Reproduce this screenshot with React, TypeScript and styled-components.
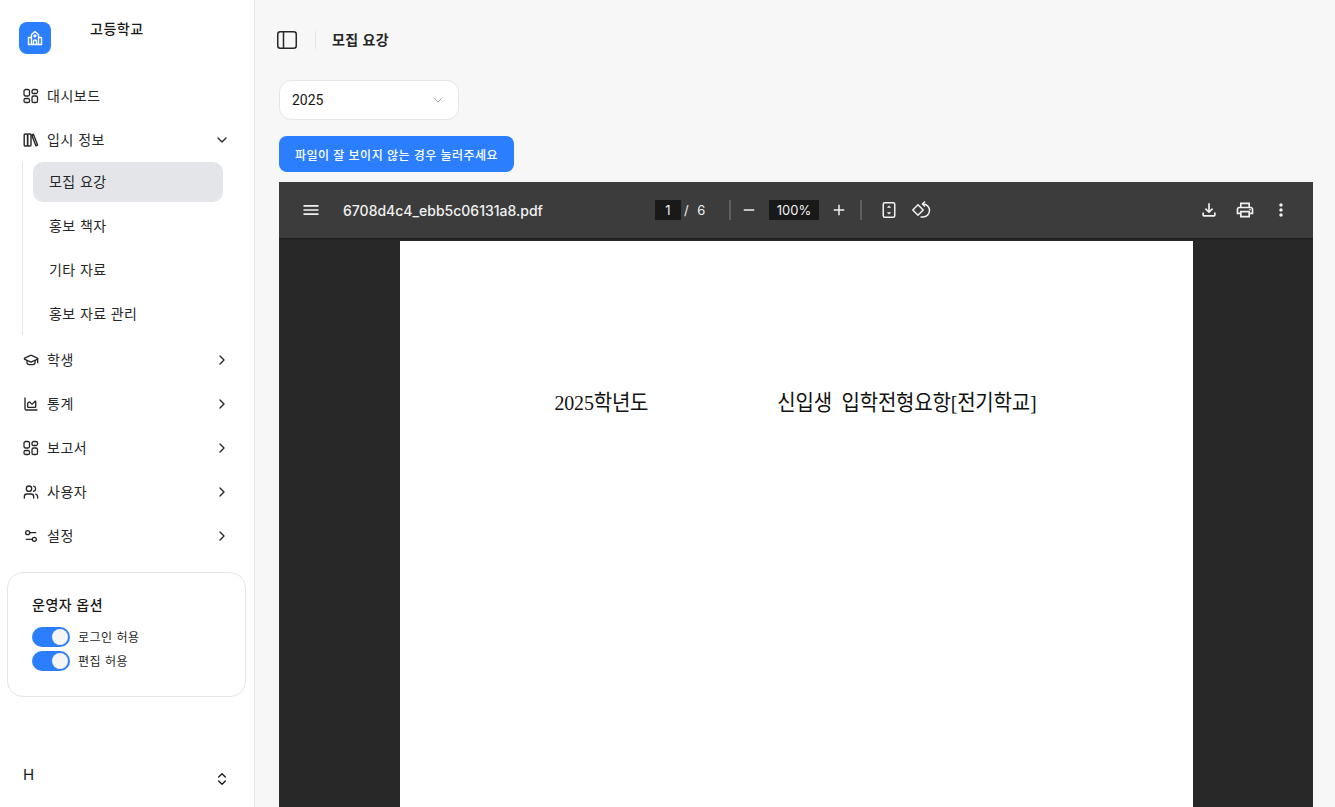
import styled, { createGlobalStyle } from 'styled-components';
import { ChartArea, ChevronDown, ChevronRight, ChevronsUpDown, GraduationCap, Settings2, Users } from 'lucide-react';
import { MdAdd, MdMenu, MdMoreVert, MdOutlineFileDownload, MdOutlinePrint, MdRemove } from 'react-icons/md';

const GlobalStyle = createGlobalStyle`
  * { box-sizing: border-box; }
  html, body { margin: 0; height: 100%; }
  body {
    font-family: Inter, "Noto Sans CJK KR", sans-serif;
    color: #171717;
    background: #f7f7f7;
    overflow: hidden;
  }
`;

const Page = styled.div`
  display: flex;
  height: 100vh;
  overflow: hidden;
`;

const Sidebar = styled.aside`
  width: 255px;
  flex: none;
  display: flex;
  flex-direction: column;
  background: #fff;
  border-right: 1px solid #e5e5e5;
`;

const Brand = styled.div`
  display: flex;
  padding: 22px 0 0 19px;
  height: 74px;
`;

const LogoBox = styled.div`
  width: 32px;
  height: 32px;
  border-radius: 8px;
  background: #2b7fff;
  color: #fff;
  display: flex;
  align-items: center;
  justify-content: center;
`;

const BrandName = styled.div`
  margin: -1px 0 0 39px;
  font-size: 14px;
  line-height: 16px;
  font-weight: 500;
  letter-spacing: 0.5px;
`;

const Nav = styled.nav`
  display: flex;
  flex-direction: column;
  padding: 0 24px 0 23px;
`;

const NavRow = styled.div`
  height: 44px;
  display: flex;
  align-items: center;
  gap: 8px;
  font-size: 14px;
  color: #262626;

  svg { flex: none; }
`;

const NavText = styled.span`
  flex: 1;
  margin-top: -2px;
  letter-spacing: 0.5px;
`;

const SubList = styled.div`
  display: flex;
  flex-direction: column;
  margin: 0 0 3px -1px;
  padding: 0 7px 0 10px;
  border-left: 1px solid #e5e5e5;
  gap: 4px;
  height: 173px;
`;

const SubItem = styled.div<{ $active?: boolean }>`
  height: 40px;
  flex: none;
  display: flex;
  align-items: center;
  padding: 0 0 2px 16px;
  border-radius: 10px;
  font-size: 14px;
  letter-spacing: 0.4px;
  color: #262626;
  background: ${(p) => (p.$active ? '#e4e5e9' : 'transparent')};
`;

const OptionCard = styled.section`
  margin: 14px 8px 0 7px;
  height: 125px;
  padding: 22px 24px;
  border: 1px solid #e5e5e5;
  border-radius: 16px;
  display: flex;
  flex-direction: column;
`;

const OptionTitle = styled.div`
  font-size: 14px;
  line-height: 20px;
  font-weight: 500;
  letter-spacing: 0.5px;
  margin-bottom: 12px;
`;

const OptionRow = styled.div`
  height: 25px;
  display: flex;
  align-items: flex-start;
  gap: 8px;
  font-size: 12px;
  line-height: 21px;
  letter-spacing: 0.5px;
  color: #262626;
`;

const Toggle = styled.div`
  width: 38px;
  height: 20px;
  padding: 2px;
  border-radius: 10px;
  background: #2b7fff;
  display: flex;
  justify-content: flex-end;

  &::after {
    content: '';
    width: 16px;
    height: 16px;
    border-radius: 50%;
    background: #f5f5f5;
  }
`;

const UserRow = styled.div`
  margin-top: auto;
  padding: 0 24px 20px 23px;
  display: flex;
  justify-content: space-between;
  align-items: flex-end;
  font-size: 15px;
`;

const UserInitial = styled.span`
  line-height: 17px;
  margin-bottom: 4px;
`;

const Main = styled.main`
  flex: 1;
  min-width: 0;
  display: flex;
  flex-direction: column;
  padding: 0 22px 0 24px;
`;

const Header = styled.header`
  height: 80px;
  flex: none;
  margin-left: -2px;
  display: flex;
  align-items: center;
  color: #262626;
`;

const Divider = styled.div`
  width: 1px;
  height: 18px;
  margin: 0 16px 0 18px;
  background: #e5e5e5;
`;

const HeaderTitle = styled.div`
  font-size: 14px;
  font-weight: 600;
  letter-spacing: 0.4px;
  margin-top: -2px;
`;

const SelectBox = styled.div`
  width: 180px;
  height: 40px;
  flex: none;
  padding: 0 12px;
  display: flex;
  align-items: center;
  justify-content: space-between;
  background: #fff;
  border: 1px solid #e5e5e5;
  border-radius: 12px;
  font: 400 14px Roboto, sans-serif;
  color: #a3a3a3;
`;

const SelectValue = styled.span`
  color: #171717;
`;

const OpenButton = styled.button`
  align-self: flex-start;
  height: 36px;
  margin: 16px 0 10px;
  padding: 0 16px;
  border: 0;
  border-radius: 8px;
  background: #2b7fff;
  color: #fff;
  font: 500 12px Inter, "Noto Sans CJK KR", sans-serif;
  letter-spacing: 0.5px;
`;

const Viewer = styled.div`
  flex: 1;
  min-height: 0;
  display: flex;
  flex-direction: column;
  background: #282828;
  overflow: hidden;
`;

const ViewerBar = styled.div`
  height: 56px;
  flex: none;
  display: grid;
  grid-template-columns: 1fr auto 1fr;
  align-items: center;
  padding: 0 12px;
  background: #3c3c3c;
  color: #f1f1f1;
  box-shadow: 0 1px 2px rgba(0, 0, 0, 0.3);
`;

const BarGroup = styled.div<{ $end?: boolean }>`
  display: flex;
  align-items: center;
  justify-content: ${(p) => (p.$end ? 'flex-end' : 'flex-start')};
  margin-right: ${(p) => (p.$end ? '2px' : '0')};
`;

const IconSlot = styled.div<{ $w?: number }>`
  width: ${(p) => p.$w ?? 36}px;
  height: 36px;
  flex: none;
  display: flex;
  align-items: center;
  justify-content: center;
`;

const FileName = styled.div`
  margin-left: 12px;
  font-size: 14px;
  font-weight: 500;
`;

const NumberBox = styled.div<{ $w: number }>`
  width: ${(p) => p.$w}px;
  height: 20px;
  display: flex;
  align-items: center;
  justify-content: center;
  background: #191919;
  font-size: 13px;
`;

const PageText = styled.span`
  width: 48px;
  font-size: 13px;
  padding-left: 3px;
  word-spacing: 5px;
`;

const BarSep = styled.div`
  width: 2px;
  height: 20px;
  background: #5f5f5f;
`;

const ZoomEndSep = styled(BarSep)`
  margin-left: 3px;
`;

const ZoomBox = styled(NumberBox)`
  margin-left: 2px;
  margin-right: 2px;
`;

const FitSlot = styled(IconSlot)`
  margin-left: 11px;
`;

const Canvas = styled.div`
  flex: 1;
  display: flex;
  justify-content: center;
  padding-top: 3px;
`;

const PaperSheet = styled.div`
  width: 793px;
  height: 1122px;
  flex: none;
  background: #fff;
  color: #111;
  padding: 147px 0 0 155px;
  display: flex;
  align-items: flex-start;
  gap: 129px;
  font-family: "Liberation Serif", "Noto Sans CJK KR", serif;
  font-size: 20px;
  line-height: 28px;
  letter-spacing: -0.2px;
`;

const PaperText = styled.span`
  display: inline-block;
  transform: scaleY(1.1);
`;

const navItems = [
  { label: '학생', icon: GraduationCap },
  { label: '통계', icon: ChartArea },
  { label: '보고서', icon: GridIcon },
  { label: '사용자', icon: Users },
  { label: '설정', icon: Settings2 },
];

const subItems = ['모집 요강', '홍보 책자', '기타 자료', '홍보 자료 관리'];

function GridIcon({ size = 16 }: { size?: number }) {
  return (
    <svg width={size} height={size} viewBox="0 0 16 16" fill="none" stroke="currentColor" strokeWidth="1.3">
      <rect x="1" y="1.5" width="5.5" height="6.5" rx="1.6" />
      <rect x="1" y="10.5" width="5.5" height="4" rx="1.6" />
      <rect x="9" y="1.5" width="5.5" height="4" rx="1.6" />
      <rect x="9" y="8" width="5.5" height="6.5" rx="1.6" />
    </svg>
  );
}

function BooksIcon() {
  return (
    <svg width="16" height="16" viewBox="0 0 16 16" fill="none" stroke="currentColor" strokeWidth="1.4">
      <rect x="1.2" y="2" width="3.4" height="12" rx="1.1" />
      <rect x="4.6" y="2" width="3.4" height="12" rx="1.1" />
      <path d="M8.7 3 10.4 2.3 14.6 13 12.9 13.8z" strokeLinejoin="round" />
    </svg>
  );
}

function SchoolMark() {
  return (
    <svg width="18" height="18" viewBox="0 0 18 18" fill="none" stroke="currentColor" strokeWidth="1.4" strokeLinejoin="round">
      <path d="M5.5 15.5V5.5L9 2.5l3.5 3v10" />
      <path d="M5.5 8.5H2.5v7h13v-7h-3" />
      <path d="M7.5 15.5v-3a1.5 1.5 0 0 1 3 0v3" />
      <circle cx="9" cy="6.8" r="0.9" />
    </svg>
  );
}

function PanelIcon() {
  return (
    <svg width="20" height="18" viewBox="0 0 20 18" fill="none" stroke="currentColor" strokeWidth="1.5">
      <rect x="0.75" y="0.75" width="18.5" height="16.5" rx="2.5" />
      <path d="M6.5 1v16" />
    </svg>
  );
}

function FitIcon() {
  return (
    <svg width="20" height="20" viewBox="0 0 20 20" fill="none" stroke="currentColor" strokeWidth="1.5">
      <rect x="4.25" y="2.75" width="11.5" height="14.5" rx="1.5" />
      <path d="M10 5.5 7.8 7.8h4.4zM10 14.5 7.8 12.2h4.4z" fill="currentColor" stroke="none" />
    </svg>
  );
}

function RotateIcon() {
  return (
    <svg width="20" height="20" viewBox="0 0 20 20" fill="none" stroke="currentColor" strokeWidth="1.5">
      <path d="M7 4.8 12.2 10 7 15.2 1.8 10z" />
      <path d="M11.5 4H12a6.5 6.5 0 0 1 0 13H9.5" />
      <path d="M14 1.5 11.5 4 14 6.5" />
    </svg>
  );
}

export default function App() {
  return (
    <Page>
      <GlobalStyle />
      <Sidebar>
        <Brand>
          <LogoBox>
            <SchoolMark />
          </LogoBox>
          <BrandName>고등학교</BrandName>
        </Brand>
        <Nav>
          <NavRow>
            <GridIcon />
            <NavText>대시보드</NavText>
          </NavRow>
          <NavRow>
            <BooksIcon />
            <NavText>입시 정보</NavText>
            <ChevronDown size={16} />
          </NavRow>
          <SubList>
            {subItems.map((item, i) => (
              <SubItem key={item} $active={i === 0}>
                {item}
              </SubItem>
            ))}
          </SubList>
          {navItems.map(({ label, icon: Icon }) => (
            <NavRow key={label}>
              <Icon size={16} />
              <NavText>{label}</NavText>
              <ChevronRight size={16} />
            </NavRow>
          ))}
        </Nav>
        <OptionCard>
          <OptionTitle>운영자 옵션</OptionTitle>
          <OptionRow>
            <Toggle />
            로그인 허용
          </OptionRow>
          <OptionRow>
            <Toggle />
            편집 허용
          </OptionRow>
        </OptionCard>
        <UserRow>
          <UserInitial>H</UserInitial>
          <ChevronsUpDown size={16} />
        </UserRow>
      </Sidebar>
      <Main>
        <Header>
          <PanelIcon />
          <Divider />
          <HeaderTitle>모집 요강</HeaderTitle>
        </Header>
        <SelectBox>
          <SelectValue>2025</SelectValue>
          <ChevronDown size={16} strokeWidth={1.5} />
        </SelectBox>
        <OpenButton>파일이 잘 보이지 않는 경우 눌러주세요</OpenButton>
        <Viewer>
          <ViewerBar>
            <BarGroup>
              <IconSlot $w={40}>
                <MdMenu size={20} />
              </IconSlot>
              <FileName>6708d4c4_ebb5c06131a8.pdf</FileName>
            </BarGroup>
            <BarGroup>
              <NumberBox $w={26}>1</NumberBox>
              <PageText>/ 6</PageText>
              <BarSep />
              <IconSlot>
                <MdRemove size={18} />
              </IconSlot>
              <ZoomBox $w={50}>100%</ZoomBox>
              <IconSlot>
                <MdAdd size={18} />
              </IconSlot>
              <ZoomEndSep />
              <FitSlot $w={32}>
                <FitIcon />
              </FitSlot>
              <IconSlot $w={32}>
                <RotateIcon />
              </IconSlot>
            </BarGroup>
            <BarGroup $end>
              <IconSlot>
                <MdOutlineFileDownload size={20} />
              </IconSlot>
              <IconSlot>
                <MdOutlinePrint size={20} />
              </IconSlot>
              <IconSlot>
                <MdMoreVert size={20} />
              </IconSlot>
            </BarGroup>
          </ViewerBar>
          <Canvas>
            <PaperSheet>
              <PaperText>2025학년도</PaperText>
              <PaperText>신입생&nbsp; 입학전형요항[전기학교]</PaperText>
            </PaperSheet>
          </Canvas>
        </Viewer>
      </Main>
    </Page>
  );
}
